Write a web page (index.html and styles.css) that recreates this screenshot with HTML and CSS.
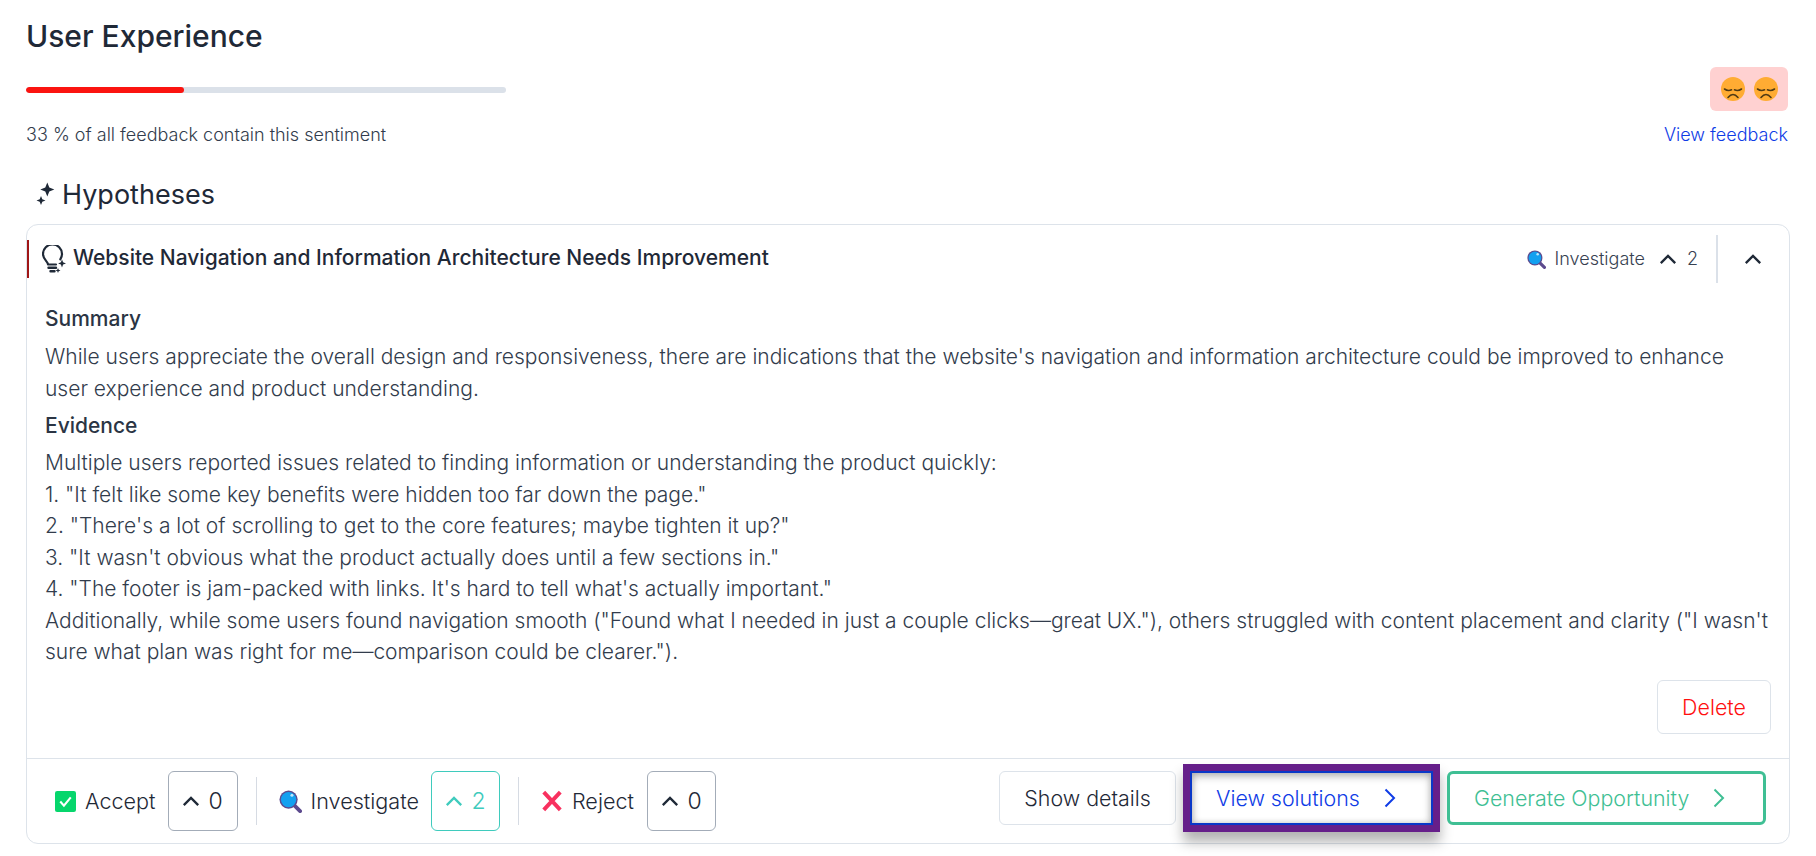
FILE: index.html
```html
<!DOCTYPE html>
<html lang="en">
<head>
<meta charset="utf-8">
<title>User Experience</title>
<link rel="stylesheet" href="styles.css">
</head>
<body>
<main class="page">
  <h1 class="title">User Experience</h1>
  <div class="sentiment">
    <div class="sentiment-left">
      <div class="bar"><div class="bar-fill"></div></div>
      <p class="share">33 % of all feedback contain this sentiment</p>
    </div>
    <div class="sentiment-right">
      <div class="faces">
        <svg class="face" viewBox="0 0 24 24"><use href="#face-shape"/></svg>
        <svg class="face" viewBox="0 0 24 24"><use href="#face-shape"/></svg>
      </div>
      <a class="view-feedback" href="#">View feedback</a>
    </div>
  </div>
  <h2 class="hyp-title">
    <svg class="sparkle" viewBox="0 0 20 24"><path fill="#1f2937" d="M12.300 1.500l2 5 5 2-5 2-2 5-2-5-5-2 5-2zM6 15l1.300 3.200 3.200 1.300-3.200 1.300L6 24l-1.300-3.200-3.200-1.300 3.200-1.300z"/></svg>
    Hypotheses
  </h2>
  <section class="card">
    <header class="card-head">
      <div class="head-left">
        <svg class="bulb" viewBox="0 0 24 28"><path d="M6 19.500c0-3-5-5-5-10.500a9.500 9.500 0 0 1 19 0c0 2-.7 3.800-1.700 5.300M6 19.500h8" fill="none" stroke="#1f2937" stroke-width="2.200" stroke-linecap="round"/><path d="M6.500 22.800h7.500M8.500 26.200h4" fill="none" stroke="#1f2937" stroke-width="2.400" stroke-linecap="round"/><path fill="#1f2937" d="M20 14.500l1.100 2.800 2.900 1.100-2.900 1.100-1.100 2.900-1.100-2.900-2.800-1.100 2.800-1.100zM16 23l.7 1.800 1.800.7-1.800.7-.7 1.800-.7-1.800-1.800-.7 1.800-.7z"/></svg>
        <h3 class="hyp-name">Website Navigation and Information Architecture Needs Improvement</h3>
      </div>
      <div class="head-right">
        <svg class="lens lens-small" viewBox="0 0 24 24"><use href="#lens-shape"/></svg>
        <span class="status">Investigate</span>
        <svg class="chev" viewBox="0 0 20 12"><path d="M2 10l8-8 8 8"/></svg>
        <span class="count">2</span>
        <span class="head-rule"></span>
        <svg class="chev chev-toggle" viewBox="0 0 20 12"><path d="M2 10l8-8 8 8"/></svg>
      </div>
    </header>
    <div class="card-body">
      <h4 class="label label-first">Summary</h4>
      <p class="text">While users appreciate the overall design and responsiveness, there are indications that the website's navigation and information architecture could be improved to enhance user experience and product understanding.</p>
      <h4 class="label">Evidence</h4>
      <p class="text">Multiple users reported issues related to finding information or understanding the product quickly:<br>1. "It felt like some key benefits were hidden too far down the page."<br>2. "There's a lot of scrolling to get to the core features; maybe tighten it up?"<br>3. "It wasn't obvious what the product actually does until a few sections in."<br>4. "The footer is jam-packed with links. It's hard to tell what's actually important."<br>Additionally, while some users found navigation smooth ("Found what I needed in just a couple clicks—great UX."), others struggled with content placement and clarity ("I wasn't sure what plan was right for me—comparison could be clearer.").</p>
      <div class="delete-row"><button class="btn btn-delete">Delete</button></div>
    </div>
    <footer class="card-foot">
      <div class="votes">
        <div class="vote">
          <svg class="check" viewBox="0 0 20 20"><rect width="20" height="20" rx="2" fill="#06d66c"/><path d="M5 10l3.500 4L15 6" fill="none" stroke="#fff" stroke-width="2"/></svg>
          <span class="vote-name">Accept</span>
          <button class="vote-btn vote-btn-wide"><svg class="chev-sm" viewBox="0 0 20 12"><path d="M2 10l8-8 8 8"/></svg>0</button>
        </div>
        <span class="vote-rule"></span>
        <div class="vote">
          <svg class="lens" viewBox="0 0 24 24"><use href="#lens-shape"/></svg>
          <span class="vote-name">Investigate</span>
          <button class="vote-btn vote-on"><svg class="chev-sm" viewBox="0 0 20 12"><path d="M2 10l8-8 8 8"/></svg>2</button>
        </div>
        <span class="vote-rule"></span>
        <div class="vote">
          <svg class="cross" viewBox="0 0 20 20"><path d="M2.500 2l15 16M17.500 2l-15 16" fill="none" stroke="#f8315f" stroke-width="3.600"/></svg>
          <span class="vote-name vote-name-last">Reject</span>
          <button class="vote-btn"><svg class="chev-sm" viewBox="0 0 20 12"><path d="M2 10l8-8 8 8"/></svg>0</button>
        </div>
      </div>
      <div class="actions">
        <button class="btn btn-details">Show details</button>
        <button class="btn btn-solutions">View solutions<svg class="next" viewBox="0 0 14 20"><path d="M2.500 1.500L11 10l-8.500 8.500"/></svg></button>
        <button class="btn btn-opportunity">Generate Opportunity<svg class="next" viewBox="0 0 14 20"><path d="M2.500 1.500L11 10l-8.500 8.500"/></svg></button>
      </div>
    </footer>
  </section>
</main>
<svg class="defs" aria-hidden="true"><defs>
<g id="lens-shape"><path d="M15 15l7 7" stroke="#5c4a8e" stroke-width="4" stroke-linecap="round"/><circle cx="10" cy="10" r="9.500" fill="#5c4a8e"/><circle cx="10" cy="10" r="8" fill="#12a0f0"/><circle cx="13.500" cy="5.500" r="1.600" fill="#bde6fa"/></g>
<g id="face-shape"><circle cx="12" cy="12" r="12" fill="#ffac33"/><path d="M3.500 12q3.500 2.500 7 .8M20.500 12q-3.500 2.500-7 .8M7 20.500q5-6 10 0" fill="none" stroke="#4f3a14" stroke-width="1.600" stroke-linecap="round"/></g>
</defs></svg>
</body>
</html>
```

FILE: styles.css
```css
* { box-sizing: border-box; }
html, body { margin: 0; padding: 0; background: #fff; }
body { font-family: Inter, "Liberation Sans", sans-serif; color: #1f2937; height: 856px; overflow: hidden; }
.page { padding: 17px 26px 0 26px; width: 1816px; }
.title { margin: 0; font-size: 30px; line-height: 38px; font-weight: 500; color: #1f2937; }
.sentiment { display: flex; justify-content: space-between; margin-top: 12px; margin-right: 2px; }
.sentiment-left { padding-top: 20px; }
.bar { width: 480px; height: 6px; border-radius: 3px; background: #dbe1e9; overflow: hidden; }
.bar-fill { width: 33%; height: 100%; background: #fb1410; border-radius: 3px; }
.share { margin: 30px 0 0; font-size: 18px; line-height: 24px; font-weight: 300; color: #323c4c; }
.sentiment-right { display: flex; flex-direction: column; align-items: flex-end; }
.faces { width: 78px; height: 44px; background: #ffd1d1; border-radius: 6px; display: flex; align-items: center; justify-content: center; gap: 9px; }
.face { width: 24px; height: 24px; }
.view-feedback { margin-top: 12px; font-size: 18px; line-height: 24px; font-weight: 300; color: #0f3ce6; text-decoration: none; }
.hyp-title { margin: 30px 0 0; display: flex; align-items: center; gap: 7px; padding-left: 9px; font-size: 27px; line-height: 36px; font-weight: 400; color: #1f2937; }
.sparkle { width: 20px; height: 24px; margin-top: -4px; }
.card { margin-top: 11px; width: 1764px; height: 620px; border: 1px solid #dde3ea; border-radius: 12px; display: flex; flex-direction: column; }
.card-head { display: flex; justify-content: space-between; align-items: center; height: 68px; padding: 0 27px 0 15px; position: relative; }
.card-head::before { content: ""; position: absolute; left: 0; top: 15px; width: 2px; height: 38px; background: #a01616; }
.head-left { display: flex; align-items: center; gap: 7px; }
.bulb { width: 24px; height: 28px; }
.hyp-name { margin: 0 0 4px; font-size: 21px; font-weight: 500; color: #1f2937; }
.head-right { display: flex; align-items: center; }
.lens { width: 23px; height: 23px; }
.lens-small { width: 19px; height: 19px; margin-right: 8px; }
.status { font-size: 18px; font-weight: 300; color: #374151; margin: 0 14px 2px 1px; }
.chev { width: 18px; height: 11px; fill: none; stroke: #1f2937; stroke-width: 2.600; margin-right: 10px; }
.count { font-size: 18px; font-weight: 300; color: #374151; margin-bottom: 2px; }
.head-rule { width: 2px; height: 48px; background: #dbe1e9; margin: 0 26px 0 18px; }
.chev-toggle { margin-right: 0; }
.card-body { flex: 1; padding: 10px 18px 0; }
.label { margin: 0 0 6px; font-size: 21px; line-height: 31px; font-weight: 500; color: #2b3544; }
.label-first { margin-bottom: 7px; }
.text { margin: 0 0 6px; font-size: 21px; line-height: 31.500px; font-weight: 300; color: #323c4c; }
.delete-row { display: flex; justify-content: flex-end; margin-top: 12px; }
.btn { font-family: inherit; background: #fff; font-size: 21.400px; border: 1px solid #dde3ea; border-radius: 6px; height: 54px; display: inline-flex; align-items: center; justify-content: center; }
.btn-delete { width: 114px; color: #ff0f0f; font-weight: 300; }
.card-foot { height: 85px; border-top: 1px solid #dde3ea; display: flex; justify-content: space-between; align-items: flex-start; padding: 12px 23px 0 28px; }
.votes { display: flex; align-items: center; }
.vote { display: flex; align-items: center; }
.vote-name { font-size: 21.600px; font-weight: 300; margin: 0 12px 0 9px; color: #1f2937; }
.vote-name-last { margin-right: 13px; }
.vote-btn { font-family: inherit; font-size: 23px; font-weight: 300; color: #1f2937; width: 69px; height: 60px; background: #fff; border: 1px solid #a3acb8; border-radius: 6px; display: flex; align-items: center; justify-content: center; gap: 8px; }
.vote-btn-wide { width: 70px; }
.vote-on { color: #3fcbbd; border-color: #3fcbbd; }
.chev-sm { width: 18px; height: 11px; fill: none; stroke: currentColor; stroke-width: 2.600; }
.vote-rule { width: 1px; height: 48px; background: #d6dbe3; margin: 0 22px 0 18px; }
.check { width: 21px; height: 21px; }
.cross { width: 22px; height: 22px; }
.actions { display: flex; align-items: flex-start; gap: 14px; }
.btn-details { width: 177px; color: #1f2937; font-weight: 300; }
.btn-solutions { width: 243px; justify-content: flex-start; padding-left: 24px; color: #0f3ce6; font-weight: 300; background: #fff; border: 2px solid #0a38c8; border-radius: 0; gap: 23px; box-shadow: 0 0 0 7px #661f8a, 0 10px 12px 7px rgba(0,0,0,.3), inset 0 3px 8px rgba(0,0,0,.28), inset 0 0 6px rgba(0,0,0,.14); }
.btn-opportunity { width: 319px; justify-content: flex-start; padding-left: 24px; color: #3fbf94; font-weight: 300; border: 3px solid #3fbf94; gap: 23px; }
.next { width: 14px; height: 20px; fill: none; stroke: currentColor; stroke-width: 2; }
.defs { position: absolute; width: 0; height: 0; }
```
